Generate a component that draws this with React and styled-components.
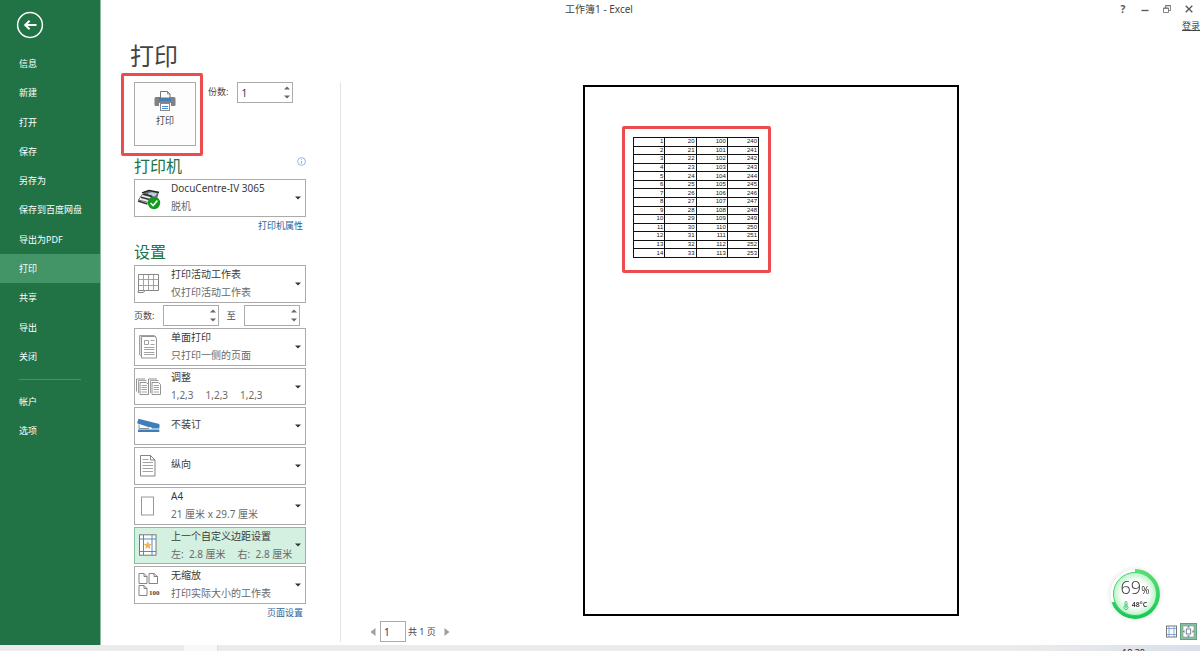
import React from 'react';
import styled, { createGlobalStyle } from 'styled-components';

const GlobalStyle = createGlobalStyle`
  *, *::before, *::after { box-sizing: border-box; }
  body {
    margin: 0;
    background: #fff;
    color: #444;
    font-family: "Noto Sans", "Noto Sans CJK SC", sans-serif;
    font-size: 9px;
  }
  button, input, select { font: inherit; color: inherit; margin: 0; padding: 0; border-radius: 0; }
  button { background: none; border: 0; }
  h1, h2 { margin: 0; font-weight: 400; }
  svg { display: block; flex: none; }
`;

const Screen = styled.div`
  display: flex;
  flex-direction: column;
  min-height: 100vh;
`;

const Main = styled.div`
  display: flex;
  flex: 1;
`;

/* ---------- green navigation ---------- */

const Sidebar = styled.nav`
  flex: none;
  width: 101px;
  padding-top: 11px;
  background: #217346;
  border-right: 1px solid #8fbba2;
  color: #fff;
`;

const BackButton = styled.button`
  display: block;
  margin: 0 0 10px 16px;
`;

const NavList = styled.div`
  display: flex;
  flex-direction: column;
  height: ${(p) => p.$height}px;
`;

const NavItem = styled.a`
  display: flex;
  flex: 1;
  align-items: center;
  padding-left: 19px;
  color: #fff;
  text-decoration: none;
  white-space: nowrap;
  background: ${(p) => (p.$active ? '#439467' : 'transparent')};
`;

const NavRule = styled.hr`
  height: 1px;
  margin: 8px 19px 7px;
  border: 0;
  background: #439467;
`;

/* ---------- window frame ---------- */

const Content = styled.div`
  display: flex;
  flex: 1;
  flex-direction: column;
  min-width: 0;
`;

const TitleBar = styled.header`
  display: flex;
  height: 18px;
  align-items: center;
`;

const WindowTitle = styled.div`
  flex: 1;
  padding-right: 15px;
  text-align: center;
  font-size: 10px;
  line-height: 16px;
`;

const WindowButton = styled.button`
  display: grid;
  place-items: center;
  width: 22px;
  height: 17px;
  font-size: 10px;
  font-weight: 700;
  color: #555;
`;

const Account = styled.div`
  height: 16px;
  text-align: right;
  line-height: 16px;
`;

const AccountLink = styled.a`
  color: #444;
`;

const PageTitle = styled.h1`
  padding-left: 29px;
  height: 39px;
  font-size: 24px;
  line-height: 44px;
  color: #444;
`;

const Body = styled.div`
  display: flex;
  flex: 1;
`;

/* ---------- settings column ---------- */

const Settings = styled.section`
  flex: none;
  width: 239px;
  padding: 0 34px 0 33px;
`;

const PrintRow = styled.div`
  display: flex;
  align-items: flex-start;
  margin-left: -13px;
`;

const Marker = styled.div`
  flex: none;
  border: 3px solid #ee4b4f;
  border-radius: 2px;
  padding: ${(p) => p.$pad};
`;

const PrintButton = styled.button`
  display: flex;
  flex-direction: column;
  align-items: center;
  gap: 3px;
  width: 62px;
  height: 64px;
  padding-top: 8px;
  border: 1px solid #ababab;
  background: #fdfdfd;
  line-height: 14px;
`;

const Copies = styled.div`
  display: flex;
  align-items: flex-start;
  gap: 9px;
  padding: 9px 0 0 5px;
`;

const FieldLabel = styled.label`
  line-height: 20px;
  white-space: nowrap;
`;

const SpinBox = styled.div`
  display: flex;
  width: 56px;
  height: 21px;
  border: 1px solid #ababab;
  background: #fff;
`;

const SpinInput = styled.input`
  flex: 1;
  min-width: 0;
  padding-left: 3px;
  border: 0;
  outline: 0;
  background: transparent;
  font-size: 10px;
  color: #26336b;
  appearance: textfield;
  &::-webkit-inner-spin-button { display: none; }
`;

const SpinButtons = styled.div`
  display: flex;
  flex-direction: column;
  width: 10px;
`;

const SpinButton = styled.button`
  display: grid;
  flex: 1;
  place-items: center;
`;

const SectionHead = styled.div`
  display: flex;
  justify-content: space-between;
  height: ${(p) => (p.$spaced ? 31 : 23)}px;
  padding-top: ${(p) => (p.$spaced ? 8 : 0)}px;
`;

const SectionTitle = styled.h2`
  font-size: 16px;
  line-height: 20px;
  color: #217346;
`;

const LinkRow = styled.div`
  padding-right: 3px;
  text-align: right;
  line-height: 17px;
`;

const TextLink = styled.a`
  color: #2b6397;
  text-decoration: none;
`;

const Picker = styled.div`
  display: grid;
  grid-template-columns: 36px 1fr 10px;
  min-height: ${(p) => (p.$fluid ? 0 : 38)}px;
  border: 1px solid ${(p) => (p.$active ? '#86bfa0' : '#ababab')};
  background: ${(p) => (p.$active ? '#d3f0e0' : '#fff')};
  align-items: center;
`;

const PickerIcon = styled.span`
  display: flex;
  padding-left: 1px;
`;

const PickerText = styled.div`
  display: flex;
  flex-direction: column;
  min-width: 0;
  align-self: ${(p) => (p.$single ? 'center' : 'start')};
  padding-bottom: ${(p) => (p.$single ? 3 : 0)}px;
  font-size: 10px;
`;

const PickerSelect = styled.select`
  height: 17px;
  border: 0;
  outline: 0;
  background: transparent;
  appearance: none;
  line-height: 17px;
  color: #3b3b3b;
`;

const PickerNote = styled.span`
  display: flex;
  gap: 12px;
  line-height: 18px;
  white-space: nowrap;
  color: #6a6a6a;
`;

const PageRange = styled.div`
  display: flex;
  align-items: center;
  justify-content: space-between;
  padding: 2px 6px 2px 0;
`;

const PickerStack = styled.div`
  display: grid;
  grid-auto-rows: 1fr;
  gap: 2px;
  height: 276px;
`;

/* ---------- preview ---------- */

const Preview = styled.section`
  display: flex;
  flex: 1;
  flex-direction: column;
  margin: 9px 0 3px;
  padding: 3px 0 0 1px;
  border-left: 1px solid #e3e3e3;
`;

const Paper = styled.div`
  align-self: center;
  width: 376px;
  aspect-ratio: 376 / 531;
  padding: 39px 37px;
  border: 2px solid #000;
  background: #fff;
`;

const PaperMark = styled(Marker)`
  width: 149px;
`;

const Sheet = styled.table`
  width: 126px;
  height: 121px;
  border-collapse: collapse;
  table-layout: fixed;
  font-family: "Liberation Sans", sans-serif;
  font-size: 6px;
  line-height: 7px;
  color: #111;
  td {
    padding: 0 1px 0 0;
    border: 1px solid #111;
    text-align: right;
  }
`;

const PreviewFooter = styled.footer`
  display: flex;
  align-items: center;
  justify-content: space-between;
  margin-top: auto;
  padding: 0 3px 0 25px;
`;

const Pager = styled.div`
  display: flex;
  align-items: center;
`;

const PagerButton = styled.button`
  display: grid;
  place-items: center;
  width: 12px;
  height: 20px;
`;

const PagerInput = styled.input`
  width: 26px;
  height: 21px;
  margin: 0 2px 0 1px;
  padding-left: 3px;
  border: 1px solid #ababab;
  font-size: 10px;
  color: #26336b;
`;

const PagerText = styled.label`
  padding-right: 5px;
  line-height: 20px;
  word-spacing: normal;
`;

const ViewButtons = styled.div`
  display: flex;
`;

const ViewButton = styled.button`
  display: grid;
  place-items: center;
  width: 17px;
  height: 17px;
  border: 1px solid ${(p) => (p.$active ? '#5fa37d' : 'transparent')};
  background: ${(p) => (p.$active ? '#86bfa0' : 'transparent')};
`;

/* ---------- desktop pieces ---------- */

const Gauge = styled.div`
  position: fixed;
  right: 36px;
  bottom: 28px;
  width: 58px;
  height: 58px;
`;

const GaugeFace = styled.div`
  position: absolute;
  inset: 0;
  display: flex;
  flex-direction: column;
  align-items: center;
  padding-top: 13px;
`;

const GaugeValue = styled.div`
  font-family: "Open Sans", sans-serif;
  font-size: 18px;
  font-weight: 300;
  line-height: 18px;
  color: #333;
  small { font-size: 10px; font-weight: 400; }
`;

const GaugeTemp = styled.div`
  display: flex;
  align-items: center;
  gap: 3px;
  font-size: 7px;
  font-weight: 600;
  line-height: 12px;
  color: #333;
`;

const Taskbar = styled.div`
  display: flex;
  flex: none;
  height: 6px;
  overflow: hidden;
  background: #ebebeb;
`;

const TaskTab = styled.div`
  width: 34px;
  margin-left: 184px;
  background: #f8f8f8;
  border-right: 1px solid #dcdcdc;
`;

const Tray = styled.div`
  width: 180px;
  margin-left: auto;
  padding: 2px 55px 0 0;
  text-align: right;
  font-size: 9px;
  line-height: 11px;
  color: #222;
  background: linear-gradient(90deg, #ebebeb, #d9dfea);
`;

/* ---------- drawings ---------- */

const Caret = ({ up, color = '#666' }) => (
  <svg width="6" height="4" viewBox="0 0 6 4" aria-hidden="true">
    <path d={up ? 'M0 3.5h6L3 .5z' : 'M0 .5h6L3 3.5z'} fill={color} />
  </svg>
);

const SideArrow = ({ right }) => (
  <svg width="6" height="8" viewBox="0 0 6 8" aria-hidden="true">
    <path d={right ? 'M.5 0v8L5.5 4z' : 'M5.5 0v8L.5 4z'} fill="#a0a0a0" />
  </svg>
);

const BackIcon = () => (
  <svg width="28" height="28" viewBox="0 0 28 28" fill="none" stroke="#fff" aria-hidden="true">
    <circle cx="14" cy="14" r="12.4" strokeWidth="1.5" />
    <path d="M9.5 14H20.500M13.600 9.700L9.200 14l4.400 4.300" strokeWidth="2" />
  </svg>
);

const PrinterIcon = () => (
  <svg width="22" height="20" viewBox="0 0 22 20" aria-hidden="true">
    <path d="M2 6h18a1.500 1.500 0 0 1 1.500 1.500V14a1 1 0 0 1-1 1h-19a1 1 0 0 1-1-1V7.500A1.500 1.500 0 0 1 2 6z" fill="#828282" />
    <rect x="5" y="6" width="12" height="4" fill="#3f7fc1" />
    <path d="M6.500 .5h7l2.500 2.500v4h-9.500z" fill="#fff" stroke="#777" />
    <path d="M13.500 .5v2.500h2.500" fill="none" stroke="#777" strokeWidth=".8" />
    <path d="M5 12h12v3H5z" fill="#fff" />
    <rect x="6.500" y="12.500" width="9" height="7" fill="#fff" stroke="#888" />
    <path d="M8 15.500h6M8 17.500h6" stroke="#4a8ad0" />
  </svg>
);

const DeviceIcon = () => (
  <svg width="26" height="24" viewBox="0 0 26 24" aria-hidden="true">
    <path d="M7 6.200L13 4l10 2-2 7-8 1.500z" fill="#6a6e72" />
    <path d="M12 7l4-.8 5 1-2 3.300-6-1z" fill="#b7d0e2" />
    <path d="M6 6.800L13 4.300l10 2" fill="none" stroke="#222" strokeWidth="1.300" />
    <path d="M6 8.500l9 2.200-1.500 6L2.500 14z" fill="#ededed" stroke="#555" strokeWidth=".8" />
    <path d="M7 8l9 2.200M5 11.300l8.500 2.200M2 15l9.500 3" stroke="#333" strokeWidth="1.400" />
    <circle cx="18" cy="17" r="6.200" fill="#129a1e" />
    <path d="M14.600 17l2.500 2.600 4.300-5" fill="none" stroke="#fff" strokeWidth="1.600" />
  </svg>
);

const SheetIcon = () => (
  <svg width="24" height="22" viewBox="0 0 24 22" fill="none" stroke="#777" strokeWidth=".9" aria-hidden="true">
    <path d="M10 17.500H22.500V1.500H2.500v16M2.500 17.500l-.5 2h5l2.500-2z" />
    <path d="M7.500 1.500v16M12.500 1.500v16M17.500 1.500v16M2.500 6.500h20M2.500 12.500h20" stroke="#999" />
  </svg>
);

const OneSideIcon = () => (
  <svg width="24" height="24" viewBox="0 0 24 24" fill="none" stroke="#888" strokeWidth=".9" aria-hidden="true">
    <path d="M5.500 21.500l-2-2V.5h15l2 2" fill="#ddd" stroke="#999" />
    <path d="M5.500 1.500H18.500l2 2v19.500H5.500z" fill="#fff" />
    <path d="M8.500 5.500h4v4h-4zM14.500 5.500h4M14.500 9.500h4M8 12.500h10.500M8 14.500h10.500M8 17.500h10.500M8 19.500h10.500" stroke="#999" />
  </svg>
);

const CollateIcon = () => (
  <svg width="26" height="18" viewBox="0 0 26 18" fill="none" stroke="#888" strokeWidth=".9" aria-hidden="true">
    {[0, 12].map((x) => (
      <g key={x} transform={`translate(${x} 0)`}>
        <path d="M.5 13.500V1H9" />
        <path d="M2.500 15V2.500h8" stroke="#999" />
        <path d="M4 4.500h6.500l2 2v10H4z" fill="#fff" />
        <path d="M5.500 7.500H11M5.500 9.500H11M5.500 11.500H11M5.500 14H11" stroke="#999" />
      </g>
    ))}
  </svg>
);

const StapleIcon = () => (
  <svg width="24" height="16" viewBox="0 0 24 16" aria-hidden="true">
    <path d="M2.500 .8L23.300 6v3.200H13L1 5.200z" fill="#3f7fb9" />
    <path d="M3 6.500v4h10" fill="none" stroke="#777" strokeWidth=".8" />
    <path d="M14 7h9.300v3.500H16z" fill="#3f7fb9" />
    <path d="M2 11.500h21.300v2.500H2z" fill="#3f7fb9" />
  </svg>
);

const PortraitIcon = () => (
  <svg width="24" height="22" viewBox="0 0 24 22" fill="none" stroke="#777" strokeWidth=".9" aria-hidden="true">
    <path d="M4.500 .5h10l4.500 4.500V21h-14.500zM14.500 .5v4.500h4.500" />
    <path d="M6.500 7.500h10.500M6.500 10.500h10.500M6.500 13.500h10.500M6.500 16.500h10.500M6.500 4.500h6" stroke="#999" />
  </svg>
);

const PaperIcon = () => (
  <svg width="24" height="20" viewBox="0 0 24 20" aria-hidden="true">
    <rect x="5.500" y="1" width="12" height="18" fill="#fff" stroke="#999" />
  </svg>
);

const MarginIcon = () => (
  <svg width="24" height="22" viewBox="0 0 24 22" aria-hidden="true">
    <rect x="3.500" y=".8" width="16.500" height="20.400" fill="#fff" stroke="#777" />
    <path d="M7.500 1v20M16 1v20M4 5h16M4 17.500h16" stroke="#3f7fc1" strokeWidth=".9" />
    <path d="M11.800 7l1.200 2.800 3 .3-2.300 2 .7 3-2.600-1.600-2.600 1.600.7-3-2.300-2 3-.3z" fill="#edb468" />
  </svg>
);

const ScaleIcon = () => (
  <svg width="24" height="26" viewBox="0 0 24 26" fill="none" stroke="#777" strokeWidth=".9" aria-hidden="true">
    <path d="M3 1.500h5l3 3v7H3zM8 1.500v3h3M13 1.500h5l3.500 3v7H13zM18 1.500v3h3.500M3 13.500h5l3 3v7H3zM8 13.500v3h3" />
    <text x="13" y="23" fontFamily="Liberation Serif, serif" fontWeight="700" fontSize="7" fill="#444" stroke="none">100</text>
  </svg>
);

const InfoIcon = () => (
  <svg width="9" height="11" viewBox="0 0 9 11" fill="none" stroke="#7ba3d6" strokeWidth=".8" aria-hidden="true">
    <circle cx="4.500" cy="5.500" r="3.900" />
    <path d="M4.500 5v2.800M4.500 3.200v1" />
  </svg>
);

const MinimizeIcon = () => (
  <svg width="8" height="8" viewBox="0 0 8 8" aria-hidden="true"><path d="M.5 5.500h7" stroke="#555" strokeWidth="1.300" /></svg>
);
const RestoreIcon = () => (
  <svg width="8" height="8" viewBox="0 0 8 8" fill="none" stroke="#666" strokeWidth=".8" aria-hidden="true">
    <path d="M.5 3h5v4.500h-5zM2.500 3V.5h5V5.500h-2M.5 3.300h5M2.500 .8h5" />
  </svg>
);
const CloseIcon = () => (
  <svg width="8" height="8" viewBox="0 0 8 8" aria-hidden="true"><path d="M.7 .7l6.600 6.600M7.300 .7L.7 7.300" stroke="#555" strokeWidth="1.300" /></svg>
);

const ShowMarginsIcon = () => (
  <svg width="11" height="13" viewBox="0 0 11 13" fill="none" aria-hidden="true">
    <rect x=".5" y="1" width="10" height="11" fill="#fff" stroke="#777" />
    <path d="M3 1v11M8 1v11M1 3.500h9M1 9.500h9" stroke="#7ba3d6" strokeWidth=".9" />
  </svg>
);
const ZoomPageIcon = () => (
  <svg width="13" height="13" viewBox="0 0 13 13" fill="none" aria-hidden="true">
    <rect x="1" y="1" width="11" height="11" fill="#fff" stroke="#999" strokeWidth=".7" />
    <rect x="4.300" y="4" width="4.400" height="5" stroke="#777" strokeWidth=".9" />
    <path d="M6.500 .8l1.500 1.700H5zM6.500 12.200l1.500-1.700H5zM.8 6.500l1.700-1.500v3zM12.200 6.500l-1.700-1.500v3z" fill="#3f7fc1" />
  </svg>
);

const GaugeRing = () => (
  <svg width="58" height="58" viewBox="0 0 58 58" fill="none" aria-hidden="true">
    <defs>
      <radialGradient id="face">
        <stop offset="62%" stopColor="#fff" />
        <stop offset="100%" stopColor="#b9f3c6" />
      </radialGradient>
      <linearGradient id="ring" x1="0" y1="0" x2="0" y2="1">
        <stop offset="0%" stopColor="#55e070" />
        <stop offset="100%" stopColor="#17c957" />
      </linearGradient>
    </defs>
    <circle cx="29" cy="29" r="28" fill="#f8f8f8" />
    <circle cx="29" cy="29" r="25" fill="#fff" stroke="#e6e6e6" strokeWidth=".6" />
    <circle cx="29" cy="29" r="21.500" fill="url(#face)" stroke="#3fd468" strokeWidth="1" />
    <path d="M29 5.800A23.200 23.200 0 1 1 7.200 37" stroke="url(#ring)" strokeWidth="3.400" />
  </svg>
);

const ThermoIcon = () => (
  <svg width="6" height="9" viewBox="0 0 6 9" fill="none" aria-hidden="true">
    <path d="M2 1.500a1 1 0 0 1 2 0v3.300a2 2 0 1 1-2 0z" stroke="#28c35c" strokeWidth=".9" />
    <path d="M3 3v4" stroke="#28c35c" />
  </svg>
);

/* ---------- composed controls ---------- */

const Spinner = ({ id, value }) => (
  <SpinBox>
    <SpinInput id={id} type="number" defaultValue={value} />
    <SpinButtons>
      <SpinButton aria-label="增加"><Caret up /></SpinButton>
      <SpinButton aria-label="减少"><Caret /></SpinButton>
    </SpinButtons>
  </SpinBox>
);

const SettingPicker = ({ label, icon, value, note, active, fluid }) => (
  <Picker $active={active} $fluid={fluid}>
    <PickerIcon>{icon}</PickerIcon>
    <PickerText $single={!note}>
      <PickerSelect aria-label={label}>
        <option>{value}</option>
      </PickerSelect>
      {note && <PickerNote>{note.map((n, i) => <span key={i}>{n}</span>)}</PickerNote>}
    </PickerText>
    <Caret color="#333" />
  </Picker>
);

const navMain = ['信息', '新建', '打开', '保存', '另存为', '保存到百度网盘', '导出为PDF', '打印', '共享', '导出', '关闭'];
const navFoot = ['帐户', '选项'];

const layoutPickers = [
  { label: '单双面', icon: <OneSideIcon />, value: '单面打印', note: ['只打印一侧的页面'] },
  { label: '排序', icon: <CollateIcon />, value: '调整', note: ['1,2,3', '1,2,3', '1,2,3'] },
  { label: '装订', icon: <StapleIcon />, value: '不装订' },
  { label: '方向', icon: <PortraitIcon />, value: '纵向' },
  { label: '纸张', icon: <PaperIcon />, value: 'A4', note: ['21 厘米 x 29.7 厘米'] },
  { label: '边距', icon: <MarginIcon />, value: '上一个自定义边距设置', note: ['左:\u00a0 2.8 厘米', '右:\u00a0 2.8 厘米'], active: true },
  { label: '缩放', icon: <ScaleIcon />, value: '无缩放', note: ['打印实际大小的工作表'] },
];

const rows = Array.from({ length: 14 }, (_, i) => [1 + i, 20 + i, 100 + i, 240 + i]);

export default function App() {
  return (
    <Screen>
      <GlobalStyle />
      <Main>
        <Sidebar>
          <BackButton aria-label="返回"><BackIcon /></BackButton>
          <NavList $height={322}>
            {navMain.map((name) => (
              <NavItem key={name} href="#" $active={name === '打印'}>{name}</NavItem>
            ))}
          </NavList>
          <NavRule />
          <NavList $height={58}>
            {navFoot.map((name) => <NavItem key={name} href="#">{name}</NavItem>)}
          </NavList>
        </Sidebar>

        <Content>
          <TitleBar>
            <WindowTitle>工作簿1 - Excel</WindowTitle>
            <WindowButton>?</WindowButton>
            <WindowButton aria-label="最小化"><MinimizeIcon /></WindowButton>
            <WindowButton aria-label="还原"><RestoreIcon /></WindowButton>
            <WindowButton aria-label="关闭"><CloseIcon /></WindowButton>
          </TitleBar>
          <Account><AccountLink href="#">登录</AccountLink></Account>
          <PageTitle>打印</PageTitle>

          <Body>
            <Settings>
              <PrintRow>
                <Marker $pad="6px 4px 7px 10px">
                  <PrintButton><PrinterIcon />打印</PrintButton>
                </Marker>
                <Copies>
                  <FieldLabel htmlFor="copies">份数:</FieldLabel>
                  <Spinner id="copies" value={1} />
                </Copies>
              </PrintRow>

              <SectionHead>
                <SectionTitle>打印机</SectionTitle>
                <InfoIcon />
              </SectionHead>
              <SettingPicker label="打印机" icon={<DeviceIcon />} value="DocuCentre-IV 3065" note={['脱机']} />
              <LinkRow><TextLink href="#">打印机属性</TextLink></LinkRow>

              <SectionHead $spaced>
                <SectionTitle>设置</SectionTitle>
              </SectionHead>
              <SettingPicker label="打印范围" icon={<SheetIcon />} value="打印活动工作表" note={['仅打印活动工作表']} />
              <PageRange>
                <FieldLabel htmlFor="from">页数:</FieldLabel>
                <Spinner id="from" />
                <FieldLabel htmlFor="to">至</FieldLabel>
                <Spinner id="to" />
              </PageRange>
              <PickerStack>
                {layoutPickers.map((p) => <SettingPicker key={p.label} fluid {...p} />)}
              </PickerStack>
              <LinkRow><TextLink href="#">页面设置</TextLink></LinkRow>
            </Settings>

            <Preview>
              <Paper>
                <PaperMark $pad="8px 9px 12px 8px">
                  <Sheet>
                    <tbody>
                      {rows.map((r) => (
                        <tr key={r[0]}>{r.map((v) => <td key={v}>{v}</td>)}</tr>
                      ))}
                    </tbody>
                  </Sheet>
                </PaperMark>
              </Paper>
              <PreviewFooter>
                <Pager>
                  <PagerButton aria-label="上一页"><SideArrow /></PagerButton>
                  <PagerInput id="page" type="text" defaultValue="1" />
                  <PagerText htmlFor="page">共 1 页</PagerText>
                  <PagerButton aria-label="下一页"><SideArrow right /></PagerButton>
                </Pager>
                <ViewButtons>
                  <ViewButton aria-label="显示边距"><ShowMarginsIcon /></ViewButton>
                  <ViewButton aria-label="缩放到页面" $active><ZoomPageIcon /></ViewButton>
                </ViewButtons>
              </PreviewFooter>
            </Preview>
          </Body>
        </Content>
      </Main>

      <Taskbar>
        <TaskTab />
        <Tray>18:38</Tray>
      </Taskbar>

      <Gauge>
        <GaugeRing />
        <GaugeFace>
          <GaugeValue>69<small>%</small></GaugeValue>
          <GaugeTemp><ThermoIcon />48°C</GaugeTemp>
        </GaugeFace>
      </Gauge>
    </Screen>
  );
}
